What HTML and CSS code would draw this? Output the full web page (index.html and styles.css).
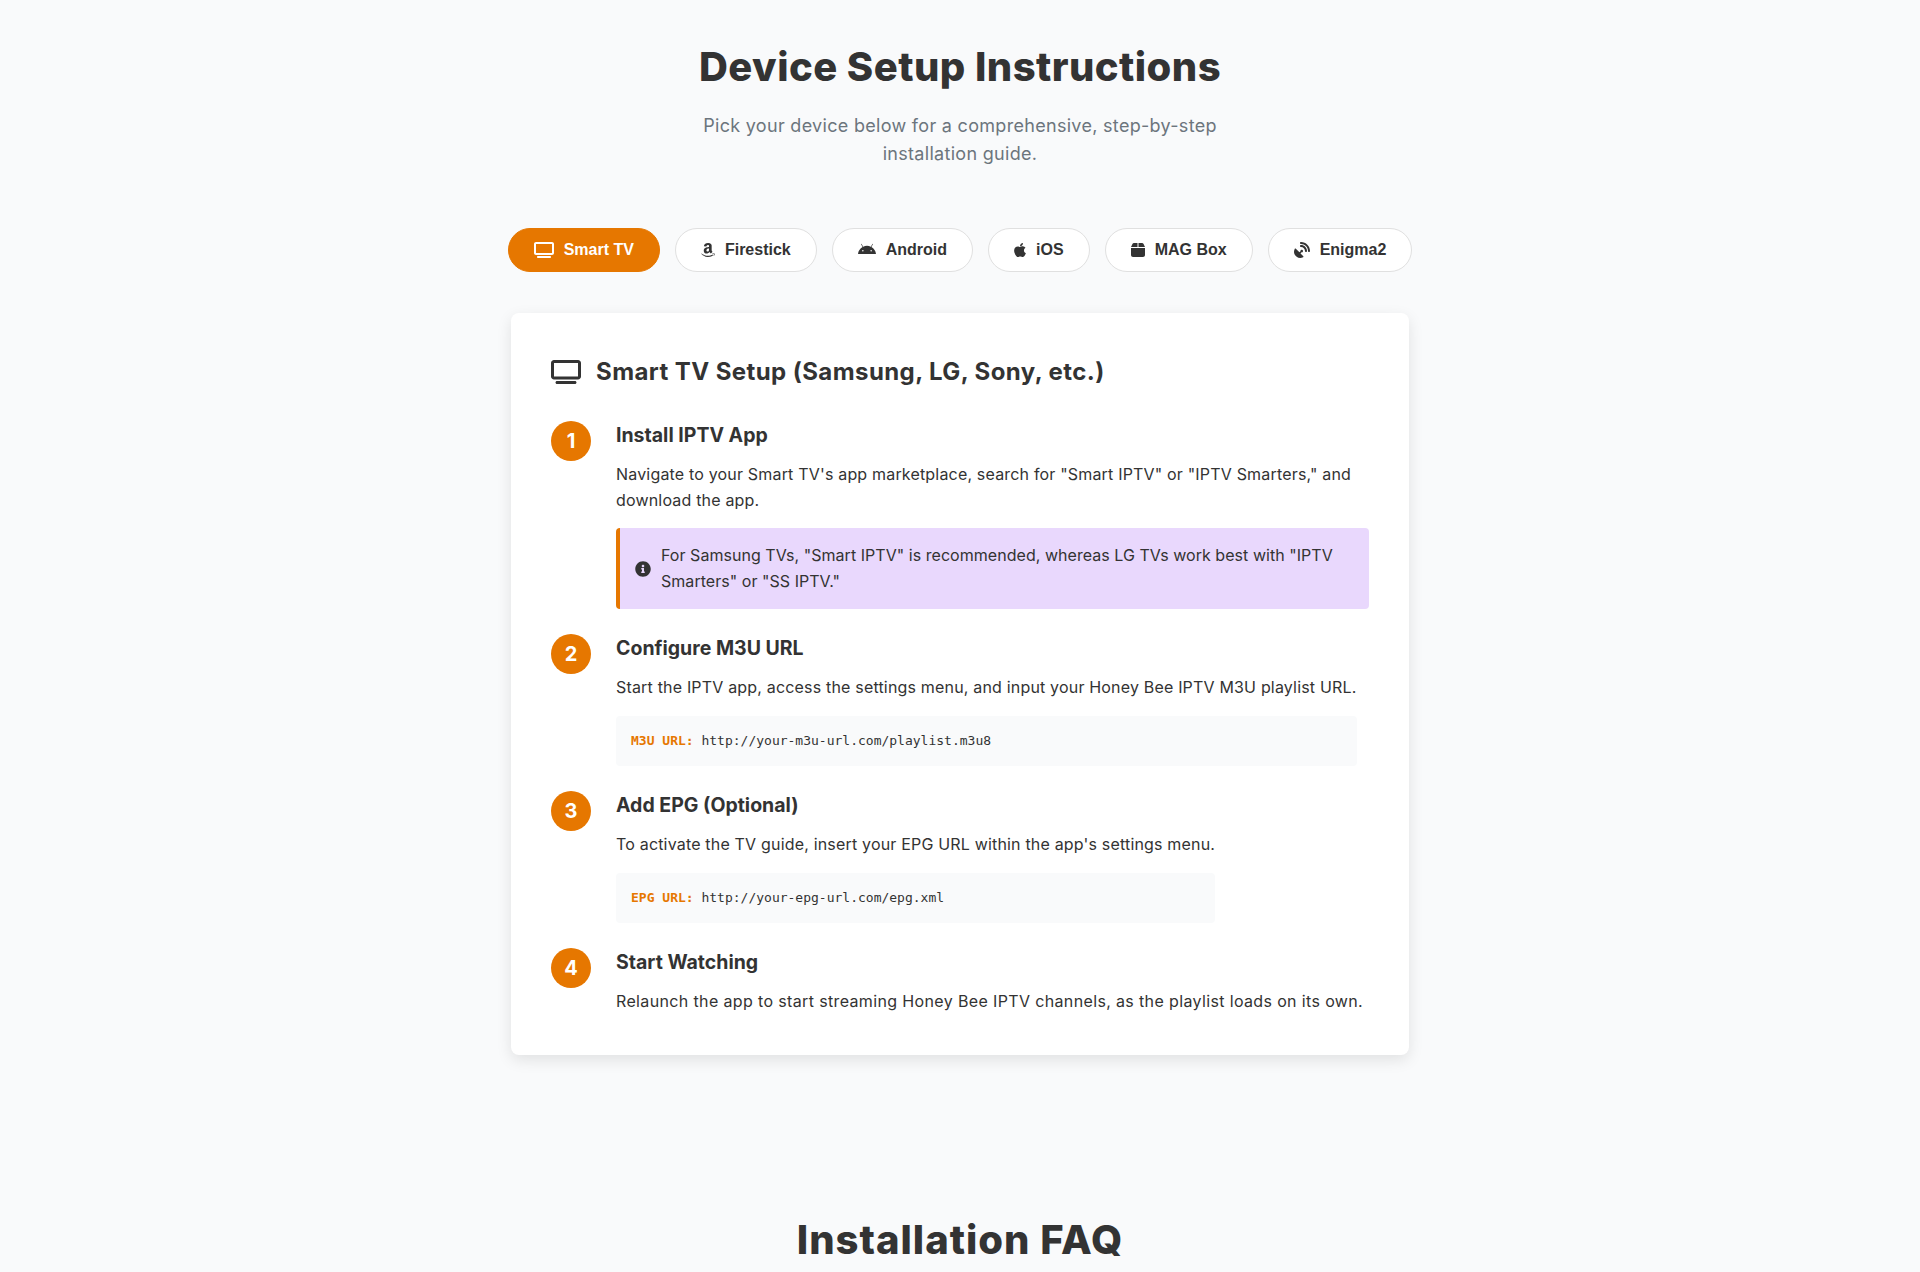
FILE: index.html
```html
<!DOCTYPE html>
<html lang="en">
<head>
    <meta charset="UTF-8">
    <title>Device Setup Instructions</title>
    <link rel="stylesheet" href="styles.css">
</head>
<body>
    <section class="setup">
        <h2 class="section-title">Device Setup Instructions</h2>
        <p class="section-sub">Pick your device below for a comprehensive, step-by-step installation guide.</p>

        <div class="tabs">
            <button class="tab active">
                <svg class="tab-icon" viewBox="0 0 640 512"><path d="M64 64V352H576V64H64zM0 64C0 28.7 28.7 0 64 0H576c35.3 0 64 28.7 64 64V352c0 35.3-28.7 64-64 64H64c-35.3 0-64-28.7-64-64V64zM128 448H512c17.7 0 32 14.3 32 32s-14.3 32-32 32H128c-17.7 0-32-14.3-32-32s14.3-32 32-32z"/></svg>
                Smart TV
            </button>
            <button class="tab">
                <svg class="tab-icon" viewBox="0 0 448 512"><path d="M257.2 162.7c-48.7 1.8-169.5 15.5-169.5 117.5 0 109.5 138.3 114 183.5 43.2 6.5 10.2 35.4 37.5 45.3 46.8l56.8-56S341 288.9 341 261.4V114.3C341 89 316.5 32 228.7 32 140.7 32 94 87 94 136.3l73.5 6.8c16.3-49.5 54.2-49.5 54.2-49.5 40.7-.1 35.5 29.8 35.5 69.1zm0 86.8c0 80-84.2 68-84.2 17.2 0-47.2 50.5-56.7 84.2-57.8v40.6zm136 163.5c-7.7 10-70 67-174.5 67S34.2 408.5 9.7 379c-6.8-7.7 1-11.3 5.5-8.3C88.5 415.2 203 488.5 387.7 401c7.5-3.7 13.3 2 5.5 12zm39.8 2.2c-6.5 15.8-16 26.8-21.2 31-5.5 4.5-9.5 2.7-6.5-3.8s19.3-46.5 12.7-55c-6.5-8.3-37-4.3-48-3.2-10.8 1-13 2-14-.3-2.3-5.7 21.7-15.5 37.5-17.5 15.7-1.8 41-.8 46 5.7 3.7 5.1 0 27.1-6.5 43.1z"/></svg>
                Firestick
            </button>
            <button class="tab">
                <svg class="tab-icon" viewBox="0 0 576 512"><path d="M420.55,301.93a24,24,0,1,1,24-24,24,24,0,0,1-24,24m-265.1,0a24,24,0,1,1,24-24,24,24,0,0,1-24,24m273.7-144.48,47.94-83a10,10,0,1,0-17.27-10h0l-48.54,84.07a301.25,301.25,0,0,0-246.56,0L116.18,64.45a10,10,0,1,0-17.27,10h0l47.94,83C64.53,202.22,8.24,285.55,0,384H576c-8.24-98.45-64.54-181.78-146.85-226.55"/></svg>
                Android
            </button>
            <button class="tab">
                <svg class="tab-icon" viewBox="0 0 384 512"><path d="M318.7 268.7c-.2-36.7 16.4-64.4 50-84.8-18.8-26.9-47.2-41.7-84.7-44.6-35.5-2.8-74.3 20.7-88.5 20.7-15 0-49.4-19.7-76.4-19.7C63.3 141.2 4 184.8 4 273.5q0 39.3 14.4 81.2c12.8 36.7 59 126.7 107.2 125.2 25.2-.6 43-17.9 75.8-17.9 31.8 0 48.3 17.9 76.4 17.9 48.6-.7 90.4-82.5 102.6-119.3-65.2-30.7-61.7-90-61.7-91.9zm-56.6-164.2c27.3-32.4 24.8-61.9 24-72.5-24.1 1.4-52 16.4-67.9 34.9-17.5 19.8-27.8 44.3-25.6 71.9 26.1 2 49.9-11.4 69.5-34.3z"/></svg>
                iOS
            </button>
            <button class="tab">
                <svg class="tab-icon" viewBox="0 0 448 512"><path d="M50.7 58.5L0 160H208V32H93.7C75.5 32 58.9 42.3 50.7 58.5zM240 160H448L397.3 58.5C389.1 42.3 372.5 32 354.3 32H240V160zm208 32H0V416c0 35.3 28.7 64 64 64H384c35.3 0 64-28.7 64-64V192z"/></svg>
                MAG Box
            </button>
            <button class="tab">
                <svg class="tab-icon" viewBox="0 0 512 512"><path d="M192 32c0 17.7 14.3 32 32 32c123.7 0 224 100.3 224 224c0 17.7 14.3 32 32 32s32-14.3 32-32C512 128.9 383.1 0 224 0c-17.7 0-32 14.3-32 32zm0 96c0 17.7 14.3 32 32 32c70.7 0 128 57.3 128 128c0 17.7 14.3 32 32 32s32-14.3 32-32c0-106-86-192-192-192c-17.7 0-32 14.3-32 32zM60 216c-12-12-30-10-38 6C8 250 0 282 0 312c0 110 90 200 200 200c30 0 62-8 90-22c16-8 18-26 6-38l-88-88l34-34a40 40 0 1 0-34-34l-34 34z"/></svg>
                Enigma2
            </button>
        </div>

        <div class="guide">
            <h3 class="guide-title">
                <svg class="guide-icon" viewBox="0 0 640 512"><path d="M64 64V352H576V64H64zM0 64C0 28.7 28.7 0 64 0H576c35.3 0 64 28.7 64 64V352c0 35.3-28.7 64-64 64H64c-35.3 0-64-28.7-64-64V64zM128 448H512c17.7 0 32 14.3 32 32s-14.3 32-32 32H128c-17.7 0-32-14.3-32-32s14.3-32 32-32z"/></svg>
                Smart TV Setup (Samsung, LG, Sony, etc.)
            </h3>

            <div class="step">
                <div class="step-num">1</div>
                <div class="step-body">
                    <h4>Install IPTV App</h4>
                    <p>Navigate to your Smart TV's app marketplace, search for "Smart IPTV" or "IPTV Smarters," and download the app.</p>
                    <div class="note">
                        <svg class="note-icon" viewBox="0 0 512 512"><path d="M256 8C119 8 8 119.1 8 256c0 137 111 248 248 248s248-111 248-248C504 119.1 393 8 256 8zm0 110c23.2 0 42 18.8 42 42s-18.8 42-42 42-42-18.8-42-42 18.8-42 42-42zm56 254c0 6.6-5.4 12-12 12h-88c-6.6 0-12-5.4-12-12v-24c0-6.6 5.4-12 12-12h12v-64h-12c-6.6 0-12-5.4-12-12v-24c0-6.6 5.4-12 12-12h64c6.6 0 12 5.4 12 12v100h12c6.6 0 12 5.4 12 12v24z"/></svg>
                        <span>For Samsung TVs, "Smart IPTV" is recommended, whereas LG TVs work best with "IPTV Smarters" or "SS IPTV."</span>
                    </div>
                </div>
            </div>

            <div class="step">
                <div class="step-num">2</div>
                <div class="step-body">
                    <h4>Configure M3U URL</h4>
                    <p>Start the IPTV app, access the settings menu, and input your Honey Bee IPTV M3U playlist URL.</p>
                    <div class="code"><strong>M3U URL:</strong> http://your-m3u-url.com/playlist.m3u8</div>
                </div>
            </div>

            <div class="step">
                <div class="step-num">3</div>
                <div class="step-body">
                    <h4>Add EPG (Optional)</h4>
                    <p>To activate the TV guide, insert your EPG URL within the app's settings menu.</p>
                    <div class="code"><strong>EPG URL:</strong> http://your-epg-url.com/epg.xml</div>
                </div>
            </div>

            <div class="step step-last">
                <div class="step-num">4</div>
                <div class="step-body">
                    <h4>Start Watching</h4>
                    <p>Relaunch the app to start streaming Honey Bee IPTV channels, as the playlist loads on its own.</p>
                </div>
            </div>
        </div>
    </section>

    <section class="faq">
        <h2 class="section-title">Installation FAQ</h2>
    </section>
</body>
</html>
```

FILE: styles.css
```css
:root {
    --orange: #e67700;
    --dark: #333333;
    --gray: #6c757d;
    --light: #f9fafb;
    --white: #ffffff;
}

* {
    box-sizing: border-box;
    margin: 0;
    padding: 0;
}

html {
    overflow: hidden;
}

body {
    font-family: 'Inter', 'Noto Sans', sans-serif;
    color: var(--dark);
    background-color: var(--light);
}

.setup {
    padding-top: 40px;
}

.section-title {
    font-size: 40px;
    line-height: 53px;
    font-weight: 800;
    letter-spacing: 0.45px;
    text-align: center;
    color: var(--dark);
}

.section-sub {
    max-width: 600px;
    margin: 19px auto 0;
    font-size: 18px;
    line-height: 28px;
    letter-spacing: 0.3px;
    text-align: center;
    color: var(--gray);
}

.tabs {
    display: flex;
    justify-content: center;
    gap: 15px;
    margin-top: 60px;
}

.tab {
    display: flex;
    align-items: center;
    gap: 10px;
    height: 44px;
    padding: 0 25px;
    font-family: 'Liberation Sans', Arial, sans-serif;
    font-size: 16px;
    font-weight: 700;
    color: var(--dark);
    background-color: var(--white);
    border: 1px solid #e0e0e0;
    border-radius: 22px;
}

.tab.active {
    color: var(--white);
    background-color: var(--orange);
    border-color: var(--orange);
}

.tab-icon {
    height: 16px;
    width: auto;
    fill: currentColor;
}

.guide {
    width: 898px;
    margin: 41px auto 0;
    padding: 40px 40px 41px;
    background-color: var(--white);
    border-radius: 8px;
    box-shadow: 0 5px 15px rgba(0, 0, 0, 0.1);
}

.guide-title {
    display: flex;
    align-items: center;
    gap: 15px;
    font-size: 24px;
    line-height: 38.4px;
    font-weight: 700;
    letter-spacing: 0.42px;
    margin-bottom: 30px;
}

.guide-icon {
    width: 30px;
    height: 24px;
    fill: currentColor;
}

.step {
    display: flex;
    gap: 25px;
    margin-bottom: 25px;
}

.step-last {
    margin-bottom: 0;
}

.step-num {
    flex: none;
    width: 40px;
    height: 40px;
    border-radius: 50%;
    font-size: 20px;
    font-weight: 700;
    line-height: 40px;
    text-align: center;
    color: var(--white);
    background-color: var(--orange);
}

.step-body h4 {
    font-size: 19.5px;
    line-height: 29px;
    font-weight: 700;
    margin-bottom: 11.7px;
}

.step-body p {
    font-size: 16px;
    line-height: 25.6px;
    letter-spacing: 0.18px;
}

.step-last .step-body p {
    letter-spacing: 0.36px;
}

.note {
    display: flex;
    align-items: center;
    gap: 10px;
    margin-top: 15px;
    padding: 15px;
    font-size: 16px;
    line-height: 25.6px;
    letter-spacing: 0.04px;
    background-color: #e9d8fd;
    border-left: 4px solid var(--orange);
    border-radius: 4px;
}

.note-icon {
    flex: none;
    width: 16px;
    height: 16px;
    fill: var(--dark);
}

.code {
    margin-top: 15px;
    padding: 15px;
    font-family: 'DejaVu Sans Mono', monospace;
    font-size: 13px;
    line-height: 20.5px;
    background-color: var(--light);
    border-radius: 4px;
}

.code strong {
    color: var(--orange);
}

.faq {
    padding-top: 158px;
}

.faq .section-title {
    letter-spacing: 1px;
}
```
